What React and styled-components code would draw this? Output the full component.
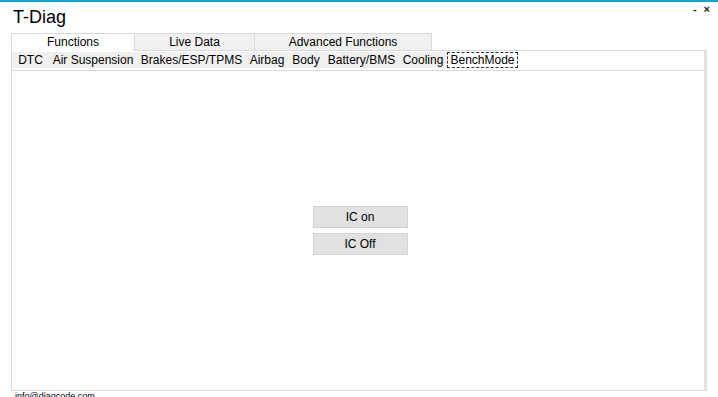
import React from "react"
import styled, { createGlobalStyle } from "styled-components"

const GlobalStyle = createGlobalStyle`
  html, body {
    margin: 0;
    padding: 0;
    background: #ffffff;
    overflow: hidden;
  }
  body {
    font-family: "Liberation Sans", Arial, sans-serif;
    color: #000000;
  }
`

const Window = styled.div`
  width: 718px;
  height: 397px;
  box-sizing: border-box;
  border-top: 2px solid #0ba6d6;
  display: flex;
  flex-direction: column;
  overflow: hidden;
`

const TitleBar = styled.div`
  height: 31px;
  display: flex;
  justify-content: space-between;
  align-items: flex-start;
  padding-left: 13px;
  flex-shrink: 0;
`

const Title = styled.div`
  font-size: 18px;
  line-height: 20px;
  margin-top: 5px;
`

const Controls = styled.div`
  display: flex;
  gap: 7px;
  margin-right: 8px;
  margin-top: 1px;
  font-size: 11px;
  line-height: 12px;
`

const Control = styled.span`
  color: #222;
  font-weight: bold;
`

const TabStrip = styled.div`
  display: flex;
  margin-left: 11px;
  height: 18px;
  flex-shrink: 0;
`

const Tab = styled.div`
  width: ${(p) => p.$w}px;
  box-sizing: border-box;
  margin-left: -1px;
  border: 1px solid #d9d9d9;
  border-bottom: ${(p) => (p.$active ? "none" : "1px solid #d9d9d9")};
  background: ${(p) => (p.$active ? "#ffffff" : "#f0f0f0")};
  font-size: 12px;
  line-height: 16px;
  text-align: center;
  position: relative;
  z-index: ${(p) => (p.$active ? 1 : 0)};
  &:first-child {
    margin-left: 0;
  }
`

const Panel = styled.div`
  margin-left: 11px;
  width: 696px;
  height: 341px;
  box-sizing: border-box;
  border: 1px solid #dadada;
  border-right: 3px solid #e3e3e3;
  margin-top: -1px;
  display: flex;
  flex-direction: column;
  flex-shrink: 0;
`

const SubTabs = styled.div`
  display: flex;
  height: 19px;
  border-bottom: 1px solid #dadada;
  padding-left: 0px;
  flex-shrink: 0;
`

const SubTab = styled.div`
  width: ${(p) => p.$w}px;
  box-sizing: border-box;
  font-size: 12px;
  line-height: 15px;
  text-align: center;
  white-space: nowrap;
  background: ${(p) => (p.$active ? "#ffffff" : "#f0f0f0")};
  border: ${(p) => (p.$active ? "1px dashed #333" : "1px solid #f0f0f0")};
  margin: 1px 0 2px 0;
`

const Body = styled.div`
  flex: 1;
  display: flex;
  flex-direction: column;
  align-items: center;
  justify-content: center;
  gap: 5px;
  padding-left: 4px;
`

const Button = styled.button`
  width: 95px;
  height: 22px;
  box-sizing: border-box;
  background: #e1e1e1;
  border: 1px solid #d3d3d3;
  font-family: "Liberation Sans", Arial, sans-serif;
  font-size: 12px;
  color: #000;
  padding: 0;
`

const Footer = styled.div`
  margin-left: 15px;
  font-size: 9px;
  line-height: 10px;
  margin-top: 0px;
`

const tabs = [
  { label: "Functions", w: 124, active: true },
  { label: "Live Data", w: 121 },
  { label: "Advanced Functions", w: 178 },
]

const subTabs = [
  { label: "DTC", w: 37 },
  { label: "Air Suspension", w: 88 },
  { label: "Brakes/ESP/TPMS", w: 109 },
  { label: "Airbag", w: 42 },
  { label: "Body", w: 36 },
  { label: "Battery/BMS", w: 75 },
  { label: "Cooling", w: 48 },
  { label: "BenchMode", w: 71, active: true },
]

const App = () => {
  return (
    <>
      <GlobalStyle />
      <Window>
        <TitleBar>
          <Title>T-Diag</Title>
          <Controls>
            <Control>-</Control>
            <Control>×</Control>
          </Controls>
        </TitleBar>
        <TabStrip>
          {tabs.map((t) => (
            <Tab key={t.label} $w={t.w} $active={t.active}>
              {t.label}
            </Tab>
          ))}
        </TabStrip>
        <Panel>
          <SubTabs>
            {subTabs.map((t) => (
              <SubTab key={t.label} $w={t.w} $active={t.active}>
                {t.label}
              </SubTab>
            ))}
          </SubTabs>
          <Body>
            <Button>IC on</Button>
            <Button>IC Off</Button>
          </Body>
        </Panel>
        <Footer>info@diagcode.com</Footer>
      </Window>
    </>
  )
}

export default App
